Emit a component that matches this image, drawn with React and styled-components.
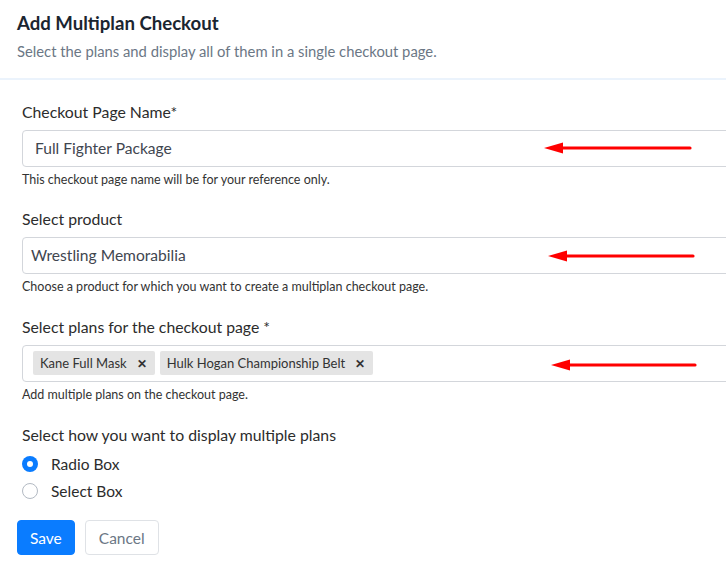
import React from "react";
import styled, { createGlobalStyle } from "styled-components";

const Global = createGlobalStyle`
  html, body { margin: 0; padding: 0; background: #fff; overflow: hidden; }
  body { font-family: Lato, "Open Sans", sans-serif; color: #333; }
  * { box-sizing: border-box; }
`;

const Page = styled.div`
  width: 726px;
  height: 571px;
  overflow: hidden;
  background: #fff;
`;

const Header = styled.header`
  padding: 11px 17px 17px;
  border-bottom: 2px solid #ebf3fc;
`;

const Title = styled.h1`
  margin: 0;
  font-size: 18.6px;
  line-height: 24px;
  font-weight: 700;
  color: #1b2530;
`;

const Subtitle = styled.p`
  margin: 6px 0 0;
  font-size: 14.8px;
  line-height: 20px;
  color: #6b7785;
`;

const Form = styled.form`
  width: 780px;
  padding: 21px 0 0 22px;
  display: flex;
  flex-direction: column;
`;

const Field = styled.div`
  display: flex;
  flex-direction: column;
  margin-bottom: ${(p) => p.$mb ?? 20}px;
`;

const Label = styled.label`
  font-size: 15.8px;
  line-height: 22px;
  color: #2c2c2c;
  margin-bottom: ${(p) => p.$mb ?? 7}px;
`;

const Box = styled.div`
  position: relative;
  height: 37px;
  border: 1px solid #d3d6db;
  border-radius: 4px;
  display: flex;
  align-items: center;
  padding: 0 ${(p) => p.$pad ?? 12}px 1px;
  gap: 5px;
  font-size: 15.6px;
  color: #3f4650;
`;

const Help = styled.div`
  margin-top: 5px;
  font-size: 12.5px;
  line-height: 16px;
  color: #333;
`;

const Tag = styled.span`
  display: inline-flex;
  align-items: center;
  height: 24px;
  padding: 0 8px 0 7px;
  background: #e4e4e4;
  border-radius: 2px;
  font-size: 13px;
  color: #333;
  gap: 10px;
`;

const TagX = styled.span`
  font-size: 12px;
  font-weight: 700;
  color: #333;
`;

const ArrowSvg = styled.svg`
  position: absolute;
  top: ${(p) => p.$top}px;
  left: ${(p) => p.$left}px;
  overflow: visible;
`;

const Arrow = ({ left, top, width }) => (
  <ArrowSvg $left={left} $top={top} width={width} height={12} viewBox={`0 0 ${width} 12`}>
    <line x1={16} y1={6} x2={width - 2} y2={6} stroke="#ff0000" strokeWidth="3.2" strokeLinecap="round" />
    <polygon points={`0,6 19,0.5 19,11.5`} fill="#ff0000" />
  </ArrowSvg>
);

const RadioGroup = styled.div`
  display: flex;
  flex-direction: column;
`;

const RadioRow = styled.label`
  display: flex;
  align-items: center;
  height: 27px;
  gap: 13px;
  font-size: 15.5px;
  color: #2c2c2c;
`;

const RadioDot = styled.span`
  width: 16px;
  height: 16px;
  border-radius: 50%;
  flex: none;
  background: ${(p) => (p.$on ? "#0a7cff" : "#fff")};
  border: ${(p) => (p.$on ? "none" : "1px solid #b3bac3")};
  display: flex;
  align-items: center;
  justify-content: center;
  &::after {
    content: "";
    width: 6px;
    height: 6px;
    border-radius: 50%;
    background: #fff;
    display: ${(p) => (p.$on ? "block" : "none")};
  }
`;

const Actions = styled.div`
  display: flex;
  gap: 10px;
  margin: 16px 0 0 -5px;
`;

const Button = styled.button`
  height: 35px;
  padding: 0 ${(p) => (p.$primary ? 12 : 13)}px;
  border-radius: 4px;
  font-family: Lato, "Open Sans", sans-serif;
  font-size: 15.5px;
  border: 1px solid ${(p) => (p.$primary ? "#0a7cff" : "#dfe2e6")};
  background: ${(p) => (p.$primary ? "#0a7cff" : "#fff")};
  color: ${(p) => (p.$primary ? "#fff" : "#6b7785")};
  cursor: pointer;
`;

export default function App() {
  return (
    <Page>
      <Global />
      <Header>
        <Title>Add Multiplan Checkout</Title>
        <Subtitle>Select the plans and display all of them in a single checkout page.</Subtitle>
      </Header>
      <Form onSubmit={(e) => e.preventDefault()}>
        <Field $mb={20}>
          <Label>Checkout Page Name*</Label>
          <Box>
            Full Fighter Package
            <Arrow left={521} top={11} width={148} />
          </Box>
          <Help>This checkout page name will be for your reference only.</Help>
        </Field>
        <Field $mb={21}>
          <Label>Select product</Label>
          <Box $pad={8}>
            Wrestling Memorabilia
            <Arrow left={525} top={12} width={147} />
          </Box>
          <Help>Choose a product for which you want to create a multiplan checkout page.</Help>
        </Field>
        <Field $mb={21}>
          <Label>Select plans for the checkout page *</Label>
          <Box $pad={10}>
            <Tag>
              Kane Full Mask <TagX>✕</TagX>
            </Tag>
            <Tag>
              Hulk Hogan Championship Belt <TagX>✕</TagX>
            </Tag>
            <Arrow left={528} top={13} width={146} />
          </Box>
          <Help>Add multiple plans on the checkout page.</Help>
        </Field>
        <Field $mb={0}>
          <Label $mb={4}>Select how you want to display multiple plans</Label>
          <RadioGroup>
            <RadioRow>
              <RadioDot $on />
              Radio Box
            </RadioRow>
            <RadioRow>
              <RadioDot />
              Select Box
            </RadioRow>
          </RadioGroup>
        </Field>
        <Actions>
          <Button $primary type="submit">Save</Button>
          <Button type="button">Cancel</Button>
        </Actions>
      </Form>
    </Page>
  );
}
